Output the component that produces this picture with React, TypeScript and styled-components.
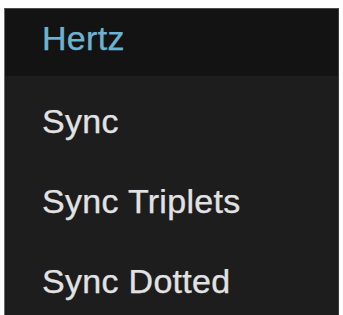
import React from 'react';
import styled, { createGlobalStyle } from 'styled-components';

const Global = createGlobalStyle`
  html, body {
    margin: 0;
    padding: 0;
    background: #fdfdfd;
    overflow: hidden;
  }
`;

// the dropdown panel
const Menu = styled.div`
  margin: 8px 4px 0 4px;
  height: 307px;
  background-color: #1d1d1d;
  border-left: 1px solid #6a6a6a;
  border-right: 1px solid #3a3a3a;
  border-top: 1px solid #4a4a4a;
  font-family: 'Liberation Sans', Arial, sans-serif;
  font-size: 34px;
  line-height: 40px;
  display: flex;
  flex-direction: column;
  overflow: hidden;
`;

const Item = styled.div<{ $selected?: boolean }>`
  height: ${p => (p.$selected ? '67px' : '80px')};
  box-sizing: border-box;
  padding: ${p => (p.$selected ? '9px' : '25px')} 0 0 37px;
  background-color: ${p => (p.$selected ? '#131313' : 'transparent')};
  color: ${p => (p.$selected ? '#6cb3d2' : '#e2e2e2')};
  -webkit-text-stroke: 0.25px ${p => (p.$selected ? '#6cb3d2' : '#e2e2e2')};
  text-shadow: 0 0 1px rgba(255, 255, 255, 0.2);
  letter-spacing: 0.3px;
  flex-shrink: 0;
`;

const options = ['Hertz', 'Sync', 'Sync Triplets', 'Sync Dotted'];

const App: React.FC = () => {
  return (
    <>
      <Global />
      <Menu>
        {options.map((o, i) => (
          <Item key={o} $selected={i === 0}>
            {o}
          </Item>
        ))}
      </Menu>
    </>
  );
};

export default App;
